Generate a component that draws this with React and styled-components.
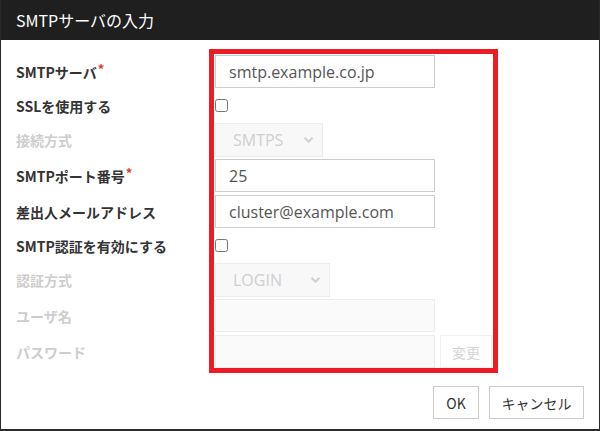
import React from "react";
import styled, { createGlobalStyle } from "styled-components";

const Global = createGlobalStyle`
  html, body { margin: 0; padding: 0; background: #fff; }
  body { font-family: "Noto Sans CJK JP", "Noto Sans", sans-serif; }
  * { box-sizing: border-box; }
`;

const Dialog = styled.div`
  position: relative;
  width: 600px;
  height: 431px;
  border-left: 1px solid #2a2a2a;
  border-right: 1px solid #2a2a2a;
  border-bottom: 2px solid #2a2a2a;
  display: flex;
  flex-direction: column;
  background: #fff;
  overflow: hidden;
`;

const Header = styled.div`
  height: 40px;
  background: #1f1f1f;
  color: #fff;
  display: flex;
  align-items: center;
  font-size: 16px;
  margin: 0 -1px;
  padding-left: 16px;
`;

const Form = styled.div`
  display: flex;
  flex-direction: column;
  gap: 3px;
  padding: 15px 15px 0 15px;
`;

const Row = styled.div`
  display: flex;
  align-items: center;
  height: ${(p) => (p.$short ? 29 : 33)}px;
`;

const Label = styled.div`
  width: 199px;
  flex: none;
  font-size: 14px;
  font-weight: bold;
  color: ${(p) => (p.$disabled ? "#cdcdcd" : "#333")};
  white-space: nowrap;
`;

const Req = styled.span`
  color: #e8381f;
  font-size: 13px;
  vertical-align: top;
  position: relative;
  top: -3px;
  margin-left: 1px;
`;

const TextInput = styled.input`
  width: 220px;
  height: 33px;
  border: 1px solid ${(p) => (p.disabled ? "#ececec" : "#cccccc")};
  background: ${(p) => (p.disabled ? "#fafafa" : "#fff")};
  padding: 0 13px;
  font-family: "Open Sans", "Noto Sans CJK JP", sans-serif;
  font-size: 16px;
  color: #555;
  outline: none;
  margin: 0;
`;

const Check = styled.input`
  width: 13px;
  height: 13px;
  margin: 0;
`;

const SelectBox = styled.div`
  position: relative;
  width: ${(p) => p.$w}px;
  height: 34px;
  border: 1px solid #ececec;
  background: #f8f8f8;
  display: flex;
  align-items: center;
  padding-left: 17px;
  font-family: "Open Sans", "Noto Sans CJK JP", sans-serif;
  font-size: 16px;
  color: #cfcfcf;
`;

const Chevron = styled.svg`
  position: absolute;
  right: 8px;
  top: 50%;
  margin-top: -4px;
`;

const SmallButton = styled.button`
  margin-left: 5px;
  width: 52px;
  height: 33px;
  border: 1px solid #f0f0f0;
  background: #fff;
  color: #d4d4d4;
  font-family: "Noto Sans CJK JP", sans-serif;
  font-size: 14px;
  padding: 0;
`;

const Footer = styled.div`
  margin-top: auto;
  display: flex;
  justify-content: flex-end;
  gap: 10px;
  padding: 0 15px 10px 0;
`;

const Button = styled.button`
  height: 33px;
  width: ${(p) => p.$w}px;
  border: 1px solid #cccccc;
  background: #fff;
  color: #333;
  font-family: "Noto Sans CJK JP", sans-serif;
  font-size: 14px;
  padding: 0;
`;

const Annotation = styled.div`
  position: absolute;
  left: 208px;
  top: 49px;
  width: 289px;
  height: 324px;
  border: 5px solid #ed1c24;
  pointer-events: none;
`;

const Select = ({ w, value }) => (
  <SelectBox $w={w}>
    {value}
    <Chevron width="11" height="8" viewBox="0 0 11 8">
      <path d="M1.5 1.8 L5.5 5.8 L9.5 1.8" fill="none" stroke="#d0d0d0" strokeWidth="2" />
    </Chevron>
  </SelectBox>
);

export default function App() {
  return (
    <>
      <Global />
      <Dialog>
        <Header>SMTPサーバの入力</Header>
        <Form>
          <Row>
            <Label>
              SMTPサーバ<Req>*</Req>
            </Label>
            <TextInput defaultValue="smtp.example.co.jp" />
          </Row>
          <Row $short>
            <Label>SSLを使用する</Label>
            <Check type="checkbox" />
          </Row>
          <Row>
            <Label $disabled>接続方式</Label>
            <Select w={108} value="SMTPS" />
          </Row>
          <Row>
            <Label>
              SMTPポート番号<Req>*</Req>
            </Label>
            <TextInput defaultValue="25" />
          </Row>
          <Row>
            <Label>差出人メールアドレス</Label>
            <TextInput defaultValue="cluster@example.com" />
          </Row>
          <Row $short>
            <Label>SMTP認証を有効にする</Label>
            <Check type="checkbox" />
          </Row>
          <Row>
            <Label $disabled>認証方式</Label>
            <Select w={115} value="LOGIN" />
          </Row>
          <Row>
            <Label $disabled>ユーザ名</Label>
            <TextInput disabled />
          </Row>
          <Row>
            <Label $disabled>パスワード</Label>
            <TextInput disabled type="password" />
            <SmallButton disabled>変更</SmallButton>
          </Row>
        </Form>
        <Footer>
          <Button $w={46}>OK</Button>
          <Button $w={95}>キャンセル</Button>
        </Footer>
        <Annotation />
      </Dialog>
    </>
  );
}
